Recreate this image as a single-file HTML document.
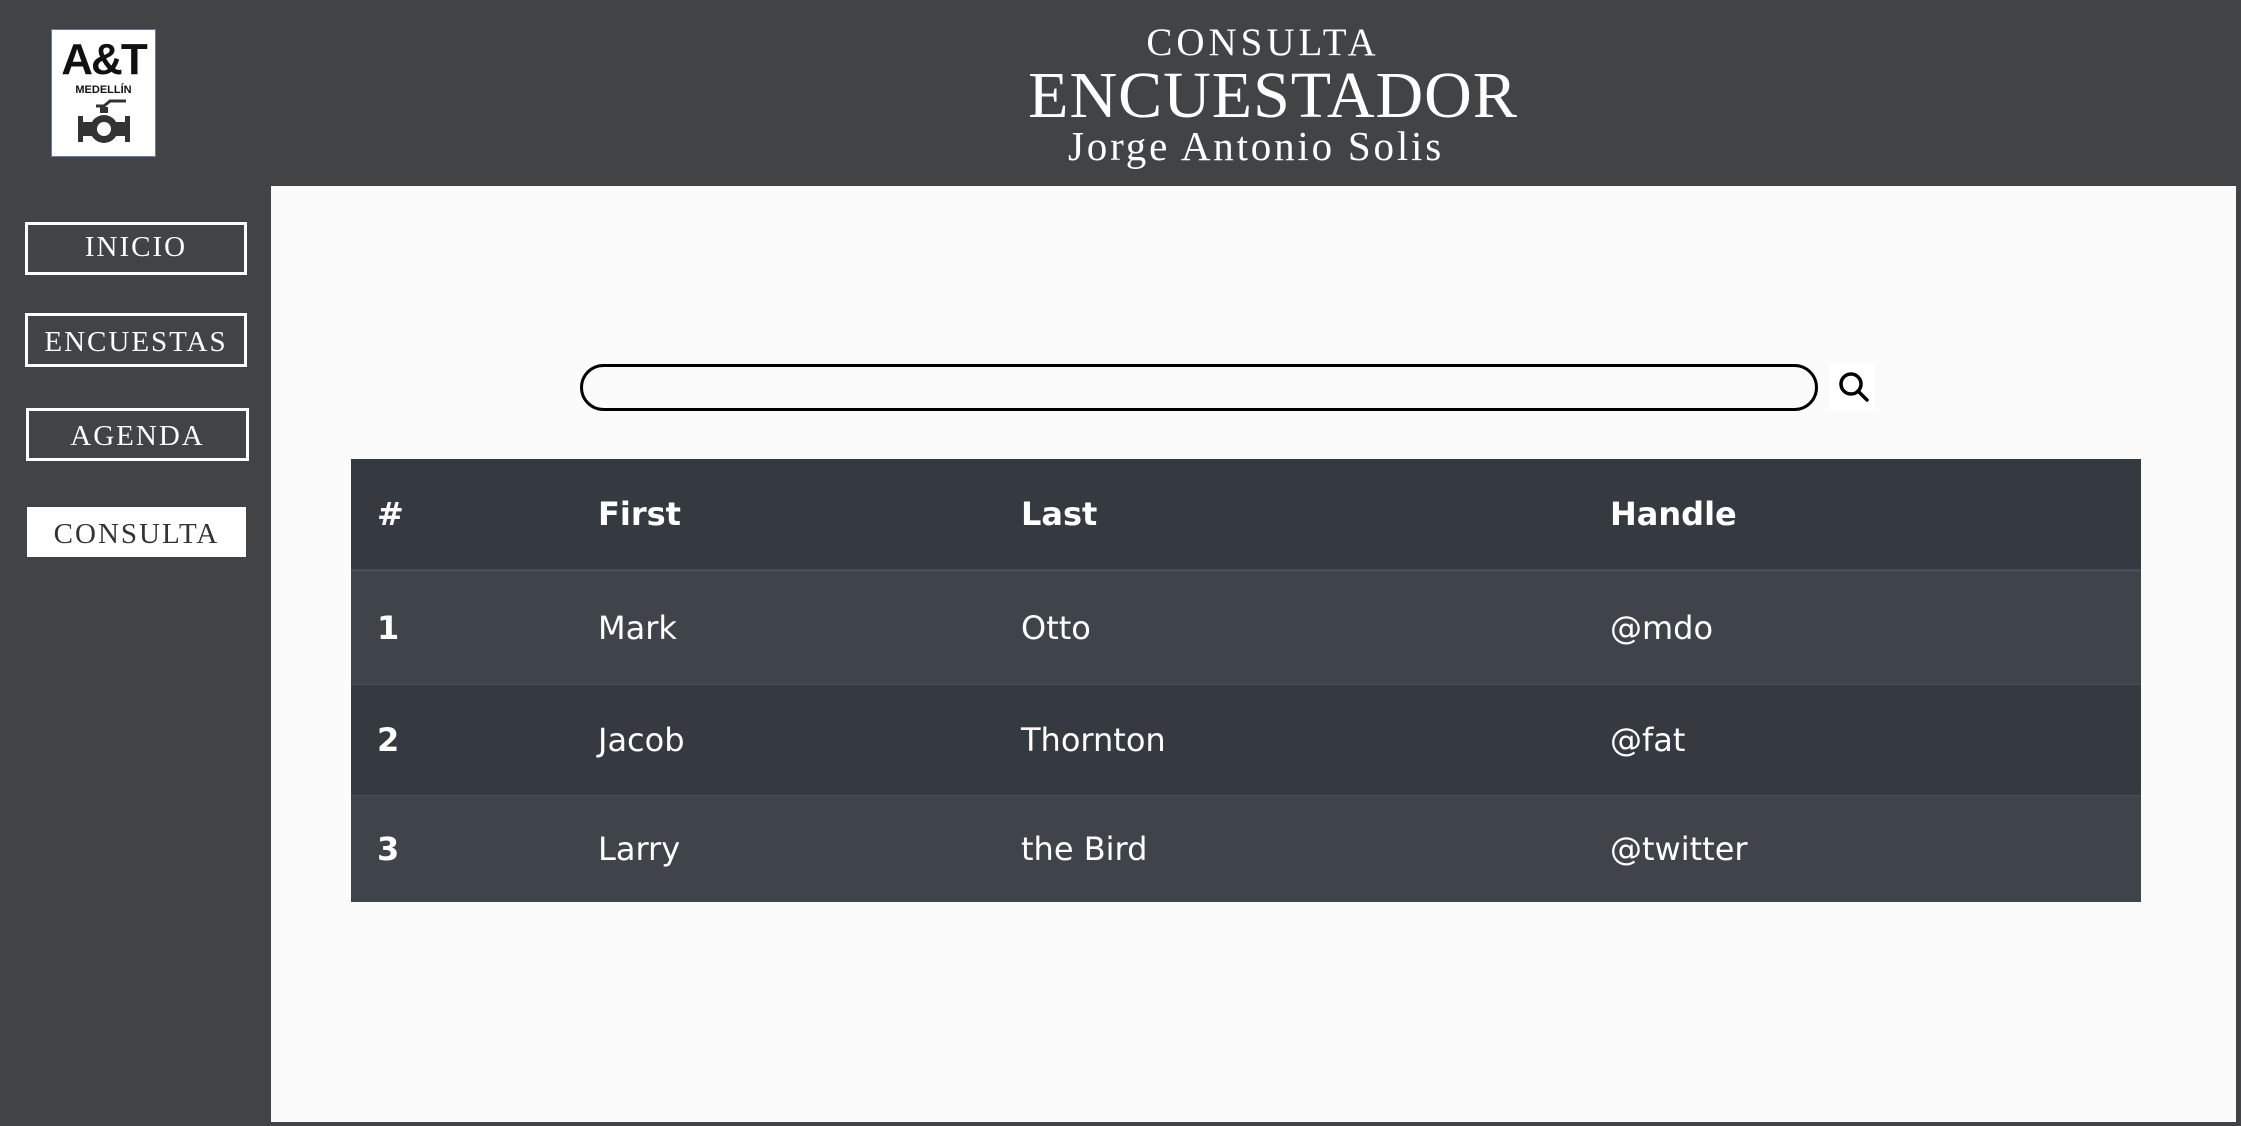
<!DOCTYPE html>
<html><head><meta charset="utf-8"><style>
*{margin:0;padding:0;box-sizing:border-box}
body{width:2241px;height:1126px;background:#424345;position:relative;overflow:hidden;font-family:"Liberation Serif",serif}
.logo{position:absolute;left:51px;top:29px;width:105px;height:128px;background:#fff;border:1px solid #6a7aa8;text-align:center}
.logo .at{font-family:"Liberation Sans",sans-serif;font-weight:bold;font-size:44px;line-height:44px;margin-top:8px;color:#111;letter-spacing:-2px}
.logo .med{font-family:"Liberation Sans",sans-serif;font-weight:bold;font-size:11px;color:#111;margin-top:2px}
.t{position:absolute;color:#fff;text-align:center;white-space:nowrap}
.nav{position:absolute;border:3px solid #fff;color:#fff;font-size:29px;letter-spacing:2px;text-align:center;font-family:"Liberation Serif",serif}
.main{position:absolute;left:271px;top:186px;width:1965px;height:936px;background:#fbfbfb}
.search{position:absolute;left:580px;top:364px;width:1238px;height:47px;border:3.5px solid #000;border-radius:24px;background:#fbfbfb}
table{position:absolute;left:351px;top:459px;width:1790px;border-collapse:collapse;font-family:"DejaVu Sans","Liberation Sans",sans-serif;color:#fff;font-size:32px}
td,th{text-align:left;padding:0 0 0 26px}
th{height:111px;background:#343a40;font-weight:bold;border-bottom:3px solid #454d55}
tr.o td{background:#3e444a}tr.e td{background:#343a40}
td{border-top:1px solid #454d55}
</style></head><body>
<div class="logo"><div class="at">A&amp;T</div><div class="med">MEDELLÍN</div>
<svg width="60" height="48" viewBox="0 0 60 48" style="margin-top:2px"><path d="M22 8 H30 L36 3 H52" stroke="#333" stroke-width="3" fill="none"/><rect x="26" y="9" width="8" height="6" fill="#333"/><rect x="4" y="18" width="5" height="26" fill="#333"/><rect x="51" y="18" width="5" height="26" fill="#333"/><rect x="9" y="24" width="42" height="14" fill="#333"/><circle cx="30" cy="31" r="14" fill="#333"/><circle cx="30" cy="31" r="7" fill="#fff"/></svg></div>
<div class="t" style="left:1063px;width:400px;top:20px;font-size:39px;letter-spacing:4px">CONSULTA</div>
<div class="t" style="left:973px;width:600px;top:58px;font-size:66px;line-height:76px;letter-spacing:1px">ENCUESTADOR</div>
<div class="t" style="left:956px;width:600px;top:122px;font-size:41px;letter-spacing:2.8px">Jorge Antonio Solis</div>
<div class="nav" style="left:25px;top:222px;width:222px;height:53px;line-height:45px">INICIO</div>
<div class="nav" style="left:25px;top:313px;width:222px;height:54px;line-height:52px">ENCUESTAS</div>
<div class="nav" style="left:26px;top:408px;width:223px;height:53px;line-height:50px">AGENDA</div>
<div class="nav" style="left:27px;top:507px;width:219px;height:50px;line-height:48px;background:#fff;color:#333;border-color:#fff">CONSULTA</div>
<div class="main"></div>
<div class="search"></div>
<div style="position:absolute;left:1829px;top:364px;width:46px;height:46px;background:#fff"></div>
<svg style="position:absolute;left:1837px;top:370px" width="34" height="34" viewBox="0 0 34 34"><circle cx="14" cy="14" r="10" stroke="#000" stroke-width="3.5" fill="none"/><path d="M21 21 L30 30" stroke="#000" stroke-width="3.5" stroke-linecap="round"/></svg>
<table>
<colgroup><col style="width:221px"><col style="width:423px"><col style="width:589px"><col></colgroup>
<tr><th>#</th><th>First</th><th>Last</th><th>Handle</th></tr>
<tr class="o" style="height:114px"><td style="font-weight:bold">1</td><td>Mark</td><td>Otto</td><td>@mdo</td></tr>
<tr class="e" style="height:111px"><td style="font-weight:bold">2</td><td>Jacob</td><td>Thornton</td><td>@fat</td></tr>
<tr class="o" style="height:107px"><td style="font-weight:bold">3</td><td>Larry</td><td>the Bird</td><td>@twitter</td></tr>
</table>
</body></html>
